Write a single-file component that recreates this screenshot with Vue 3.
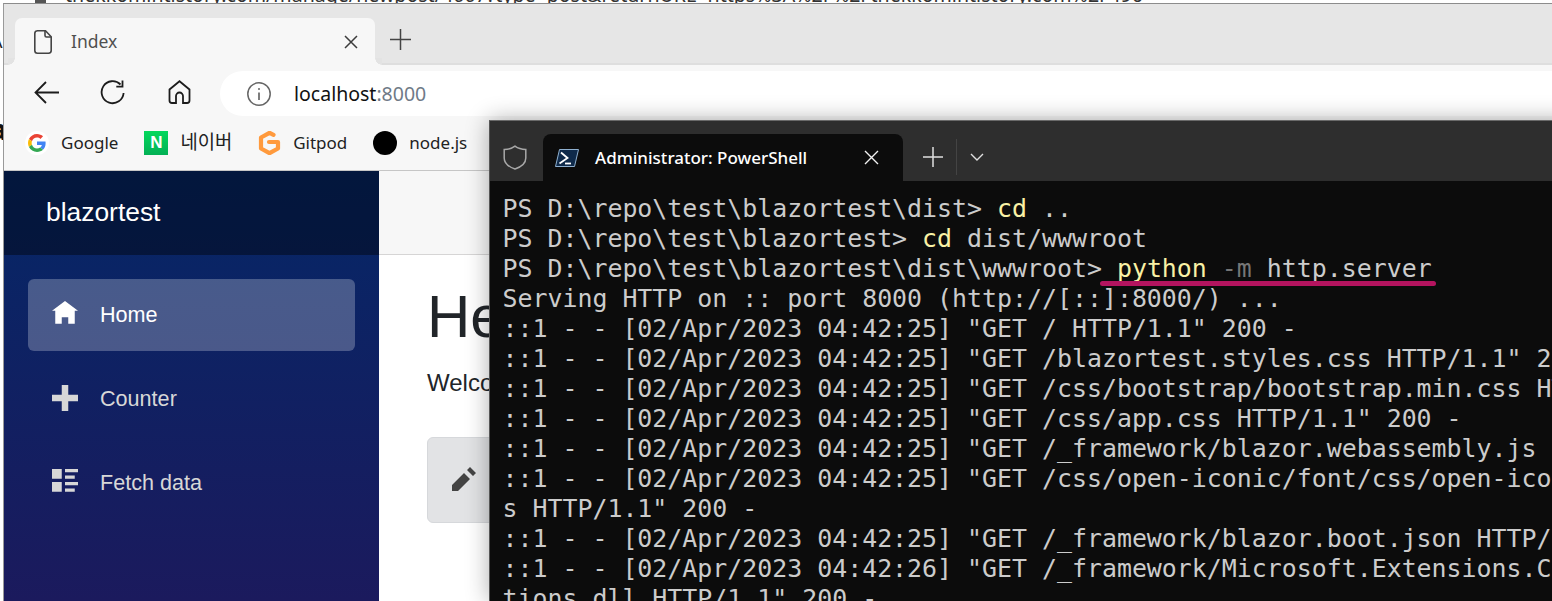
<script setup>
const bookmarks = [
  { label: 'Google', kind: 'google' },
  { label: '네이버', kind: 'naver' },
  { label: 'Gitpod', kind: 'gitpod' },
  { label: 'node.js', kind: 'node' },
]
const nav = [
  { label: 'Home', d: 'M4 0l-4 3h1v4h2v-2h2v2h2v-4.03l1 .03-4-3z', active: true },
  { label: 'Counter', d: 'M3 0v3h-3v2h3v3h2v-3h3v-2h-3v-3h-2z' },
  { label: 'Fetch data', d: 'M0 0v3h3v-3h-3zm4 0v1h4v-1h-4zm0 2v1h3v-1h-3zm-4 2v3h3v-3h-3zm4 0v1h4v-1h-4zm0 2v1h3v-1h-3z' },
]
const log = [
  'Serving HTTP on :: port 8000 (http://[::]:8000/) ...',
  '::1 - - [02/Apr/2023 04:42:25] "GET / HTTP/1.1" 200 -',
  '::1 - - [02/Apr/2023 04:42:25] "GET /blazortest.styles.css HTTP/1.1" 200 -',
  '::1 - - [02/Apr/2023 04:42:25] "GET /css/bootstrap/bootstrap.min.css HTTP/1.1" 200 -',
  '::1 - - [02/Apr/2023 04:42:25] "GET /css/app.css HTTP/1.1" 200 -',
  '::1 - - [02/Apr/2023 04:42:25] "GET /_framework/blazor.webassembly.js HTTP/1.1" 200 -',
  '::1 - - [02/Apr/2023 04:42:25] "GET /css/open-iconic/font/css/open-iconic-bootstrap.min.cs',
  's HTTP/1.1" 200 -',
  '::1 - - [02/Apr/2023 04:42:25] "GET /_framework/blazor.boot.json HTTP/1.1" 200 -',
  '::1 - - [02/Apr/2023 04:42:26] "GET /_framework/Microsoft.Extensions.Configuration.Abstrac',
  'tions.dll HTTP/1.1" 200 -',
]
</script>

<template>
  <div class="desktop">
    <div class="behind-url">
      <span class="behind-icon"></span>
      <span>thekkomintistory.com/manage/newpost/4007?type=post&amp;returnURL=https%3A%2F%2Fthekkomintistory.com%2F496</span>
    </div>
    <span class="behind-a">A</span>
    <span class="behind-b">a</span>

    <section class="browser">
      <div class="tabstrip">
        <div class="tab">
          <svg class="tab-icon" width="18" height="24" viewBox="0 0 18 24" fill="none" stroke="#444" stroke-width="1.6">
            <path d="M3 .8h8.5l5.7 6v13.7a2.7 2.7 0 0 1-2.7 2.7H3.500a2.700 2.700 0 0 1-2.700-2.700V3.500A2.700 2.700 0 0 1 3.500.8z" />
            <path d="M11 1v4.500a1.500 1.500 0 0 0 1.500 1.500H17" />
          </svg>
          <span class="tab-title">Index</span>
          <svg class="tab-close" width="14" height="14" viewBox="0 0 14 14" stroke="#3c3c3c" stroke-width="1.5">
            <path d="M1 1l12 12M13 1L1 13" />
          </svg>
        </div>
        <svg class="tab-new" width="21" height="21" viewBox="0 0 21 21" stroke="#444" stroke-width="1.5">
          <path d="M10.500 0v21M0 10.500h21" />
        </svg>
      </div>

      <div class="toolbar">
        <svg class="tb-back" width="25" height="23" viewBox="0 0 25 23" fill="none" stroke="#1c1c1c" stroke-width="1.800">
          <path d="M25 11.500H1.500M12 1L1.500 11.500 12 22" />
        </svg>
        <svg class="tb-reload" width="25" height="25" viewBox="0 0 25 25" fill="none" stroke="#1c1c1c" stroke-width="1.800">
          <path d="M20.500 4.500A11 11 0 1 0 23.600 13" />
          <path d="M22.500 .5v6.200h-6.200" />
        </svg>
        <svg class="tb-home" width="23" height="24" viewBox="0 0 23 24" fill="none" stroke="#1c1c1c" stroke-width="1.800">
          <path d="M11.500 1.200L1.500 9.500V20.500a2.500 2.500 0 0 0 2.500 2.500H8V16a3.500 3.500 0 0 1 7 0V23h4a2.500 2.500 0 0 0 2.500-2.500V9.500z" />
        </svg>
        <div class="address">
          <svg width="24" height="24" viewBox="0 0 24 24" fill="none" stroke="#666" stroke-width="1.500">
            <circle cx="12" cy="12" r="11.200" />
            <path d="M12 10.500v7.500" stroke-width="1.700" />
            <circle cx="12" cy="7" r="1" fill="#666" stroke="none" />
          </svg>
          <span class="url"><span class="url-host">localhost</span><span class="url-port">:8000</span></span>
        </div>
      </div>

      <div class="bookmarks">
        <div v-for="b in bookmarks" :key="b.kind" class="bookmark" :class="'bm-' + b.kind">
          <span v-if="b.kind === 'google'" class="google-circle">
            <svg width="18" height="18" viewBox="0 0 48 48">
              <path fill="#EA4335" d="M24 9.500c3.540 0 6.710 1.220 9.210 3.600l6.850-6.850C35.900 2.380 30.470 0 24 0 14.620 0 6.510 5.380 2.560 13.220l7.980 6.190C12.430 13.720 17.740 9.500 24 9.500z" />
              <path fill="#4285F4" d="M46.980 24.550c0-1.570-.15-3.090-.38-4.550H24v9.020h12.940c-.58 2.960-2.260 5.480-4.780 7.180l7.730 6c4.510-4.180 7.090-10.360 7.090-17.650z" />
              <path fill="#FBBC05" d="M10.530 28.590c-.48-1.450-.76-2.990-.76-4.590s.27-3.140.76-4.590l-7.980-6.190C.92 16.460 0 20.120 0 24c0 3.880.92 7.540 2.560 10.780l7.970-6.190z" />
              <path fill="#34A853" d="M24 48c6.480 0 11.930-2.130 15.890-5.810l-7.730-6c-2.150 1.450-4.920 2.300-8.160 2.300-6.260 0-11.570-4.220-13.470-9.910l-7.980 6.190C6.510 42.620 14.620 48 24 48z" />
            </svg>
          </span>
          <span v-else-if="b.kind === 'naver'" class="naver-square">N</span>
          <svg v-else-if="b.kind === 'gitpod'" width="23" height="24" viewBox="0 0 23 24" fill="none">
            <path d="M15.500 3.800L11.500 1.800 3 6.500v11l8.500 4.700 8.500-4.700v-6.500L11 11" stroke="#ff9a3d" stroke-width="4.200" stroke-linecap="round" stroke-linejoin="round" />
          </svg>
          <span v-else class="node-dot"></span>
          <span class="bm-label">{{ b.label }}</span>
        </div>
      </div>

      <div class="page">
        <aside class="sidebar">
          <div class="brand">blazortest</div>
          <nav class="nav">
            <div v-for="n in nav" :key="n.label" class="nav-item" :class="{ active: n.active }">
              <svg width="26" height="26" viewBox="0 0 8 8"><path :d="n.d" fill="currentColor" /></svg>
              <span>{{ n.label }}</span>
            </div>
          </nav>
        </aside>
        <main class="main">
          <div class="top-row"></div>
          <article class="article">
            <h1>Hello, world!</h1>
            <p>Welcome to your new app.</p>
            <div class="survey">
              <svg width="24" height="24" viewBox="0 0 8 8"><path fill="#444" d="M6 0l-1 1 2 2 1-1-2-2zm-2 2l-4 4v2h2l4-4-2-2z" /></svg>
            </div>
          </article>
        </main>
      </div>
    </section>

    <section class="terminal">
      <div class="term-bar">
        <svg class="shield" width="24" height="25" viewBox="0 0 24 25" fill="none" stroke="#a8a8a8" stroke-width="1.500">
          <path d="M12 1.200c3 2.300 6.500 3.300 10.800 3.300v8.500c0 5-4.300 8.800-10.800 11-6.500-2.200-10.800-6-10.800-11V4.500C5.500 4.500 9 3.500 12 1.200z" />
        </svg>
        <div class="term-tab">
          <svg class="ps-icon" width="24" height="18" viewBox="0 0 24 18">
            <path d="M4.500.5H23.500L19.500 17.500H.5z" fill="#0f2a4a" stroke="#8fb0d0" stroke-width="1" />
            <path d="M6 3.500l6.500 5.500-8 5.500" fill="none" stroke="#fff" stroke-width="1.800" />
            <path d="M10 14.500h6" stroke="#fff" stroke-width="1.800" />
          </svg>
          <span class="term-title">Administrator: PowerShell</span>
          <svg class="term-close" width="15" height="15" viewBox="0 0 15 15" stroke="#f2f2f2" stroke-width="1.400">
            <path d="M1 1l13 13M14 1L1 14" />
          </svg>
        </div>
        <svg class="term-new" width="20" height="20" viewBox="0 0 20 20" stroke="#e0e0e0" stroke-width="1.500">
          <path d="M10 0v20M0 10h20" />
        </svg>
        <span class="term-sep"></span>
        <svg width="14" height="8" viewBox="0 0 14 8" fill="none" stroke="#e0e0e0" stroke-width="1.400">
          <path d="M1 1l6 6 6-6" />
        </svg>
      </div>
      <div class="term-body">
        <div class="line">PS D:\repo\test\blazortest\dist&gt; <span class="cmd">cd</span> ..</div>
        <div class="line">PS D:\repo\test\blazortest&gt; <span class="cmd">cd</span> dist/wwwroot</div>
        <div class="line">PS D:\repo\test\blazortest\dist\wwwroot&gt; <span class="cmd">python</span> <span class="flag">-m</span> http.server<span class="underline"></span></div>
        <div v-for="(l, i) in log" :key="i" class="line">{{ l }}</div>
      </div>
    </section>
  </div>
</template>

<style>
html, body { margin: 0; padding: 0; background: #fff; overflow: hidden; }
</style>

<style scoped>
.desktop {
  position: relative;
  width: 1552px;
  height: 601px;
  overflow: hidden;
  background: #fff;
}
.behind-url {
  position: absolute;
  left: 35px;
  top: -19px;
  display: flex;
  align-items: center;
  gap: 19px;
  font: 400 19.600px/28px "Noto Sans", sans-serif;
  color: #333;
  white-space: nowrap;
}
.behind-icon { width: 11px; height: 20px; background: #555; }
.behind-a {
  position: absolute;
  left: -9px;
  top: 29px;
  font: 18px/24px "Noto Sans", sans-serif;
  color: #222;
}
.behind-b {
  position: absolute;
  left: -10px;
  top: 112px;
  font: 700 28px/34px "Noto Sans", sans-serif;
  color: #111;
}
.browser {
  position: absolute;
  left: 3px;
  top: 3px;
  width: 1549px;
  height: 598px;
  box-sizing: border-box;
  border-left: 1px solid #9a9a9a;
  border-top: 1px solid #8c8c8c;
  display: flex;
  flex-direction: column;
  background: #f7f7f7;
  font-family: "Noto Sans", "Noto Sans CJK KR", sans-serif;
}
.tabstrip {
  height: 61px;
  flex: none;
  background: #e6e6e6;
  box-shadow: inset 0 -2px 0 #dedede;
  display: flex;
  align-items: flex-end;
  padding-left: 11px;
}
.tab {
  position: relative;
  width: 360px;
  height: 47px;
  box-sizing: border-box;
  background: #f7f7f7;
  border-radius: 7px 7px 0 0;
  display: flex;
  align-items: center;
  padding: 0 17px 0 19px;
}
.tab::before,
.tab::after {
  content: "";
  position: absolute;
  bottom: 0;
  width: 7px;
  height: 7px;
}
.tab::before {
  left: -7px;
  background: radial-gradient(circle at 0 0, #e3e3e3 6.500px, #f7f7f7 7px);
}
.tab::after {
  right: -7px;
  background: radial-gradient(circle at 100% 0, #e3e3e3 6.500px, #f7f7f7 7px);
}
.tab-icon { flex: none; }
.tab-title {
  margin-left: 19px;
  margin-bottom: 2px;
  font-size: 17.500px;
  color: #505050;
  flex: 1;
}
.tab-close { flex: none; }
.tab-new { margin: 0 0 15px 15px; }
.toolbar {
  height: 53px;
  flex: none;
  box-sizing: border-box;
  display: flex;
  align-items: center;
  padding: 1px 0 0 30px;
  background: #f7f7f7;
}
.tb-back { margin-right: 41px; }
.tb-reload { margin-right: 43px; }
.tb-home { margin-right: 30px; }
.address {
  flex: 1;
  height: 45px;
  margin-top: 3px;
  margin-left: -1px;
  background: #fff;
  border-radius: 23px 0 0 23px;
  display: flex;
  align-items: center;
  padding-left: 27px;
  gap: 23px;
}
.url { font-size: 19.500px; }
.url-host { color: #111; }
.url-port { color: #6f7a87; }
.bookmarks {
  height: 53px;
  flex: none;
  box-sizing: border-box;
  border-bottom: 1px solid #c6c6c6;
  display: flex;
  align-items: center;
  padding: 0 0 2px 21px;
  gap: 26px;
}
.bookmark {
  display: flex;
  align-items: center;
  gap: 12px;
  font-size: 17px;
  color: #222;
}
.bm-label { margin-bottom: 2px; }
.bm-naver .bm-label { margin-bottom: 5px; font-size: 18.800px; }
.google-circle {
  width: 24px;
  height: 24px;
  border-radius: 50%;
  background: #fff;
  display: flex;
  align-items: center;
  justify-content: center;
}
.naver-square {
  width: 24px;
  height: 24px;
  background: linear-gradient(180deg, #03d85c, #03b055);
  color: #fff;
  font: 700 17px/24px "Liberation Sans", sans-serif;
  text-align: center;
}
.node-dot {
  width: 24px;
  height: 24px;
  border-radius: 50%;
  background: #000;
}
.page {
  flex: 1;
  min-height: 0;
  display: flex;
  background: #fff;
  font-family: "Liberation Sans", sans-serif;
}
.sidebar {
  width: 375px;
  flex: none;
  background: linear-gradient(180deg, #052767 0%, #1b1a5d 100%);
  display: flex;
  flex-direction: column;
}
.brand {
  height: 84px;
  flex: none;
  box-sizing: border-box;
  padding-left: 42px;
  display: flex;
  align-items: center;
  background: rgba(0, 0, 0, 0.4);
  color: #fff;
  font-size: 26.400px;
  padding-bottom: 2px;
}
.nav {
  display: flex;
  flex-direction: column;
  gap: 12px;
  padding: 24px;
}
.nav-item {
  height: 72px;
  box-sizing: border-box;
  border-radius: 6px;
  display: flex;
  align-items: center;
  gap: 22px;
  padding: 0 24px;
  color: #d7d7d7;
  font-size: 21.600px;
}
.nav-item svg { margin-top: -2px; }
.nav-item.active {
  background: rgba(255, 255, 255, 0.25);
  color: #fff;
}
.main { flex: 1; min-width: 0; display: flex; flex-direction: column; }
.top-row {
  height: 84px;
  flex: none;
  box-sizing: border-box;
  background: #f7f7f7;
  border-bottom: 1px solid #d6d5d5;
}
.article { padding: 26px 0 0 48px; color: #212529; }
.article h1 {
  margin: 0 0 12px;
  font-size: 60px;
  line-height: 72px;
  font-weight: 400;
  white-space: nowrap;
}
.article p {
  margin: 0 0 36px;
  font-size: 24px;
  line-height: 36px;
  white-space: nowrap;
}
.survey {
  height: 86px;
  box-sizing: border-box;
  background: #e2e3e5;
  border: 1px solid #d6d8db;
  border-radius: 6px;
  display: flex;
  align-items: center;
  padding-left: 24px;
  padding-bottom: 3px;
}
.terminal {
  position: absolute;
  left: 489px;
  top: 120px;
  width: 1100px;
  height: 481px;
  box-sizing: border-box;
  border-top: 1px solid #6a6a6a;
  border-left: 1px solid #555;
  background: #0c0c0c;
  box-shadow: 0 0 22px rgba(0, 0, 0, 0.32);
  display: flex;
  flex-direction: column;
}
.term-bar {
  height: 60px;
  flex: none;
  background: #2e2e2e;
  display: flex;
  align-items: center;
  padding-left: 13px;
}
.shield { flex: none; margin-top: 12px; }
.term-tab {
  align-self: flex-end;
  width: 360px;
  height: 47px;
  box-sizing: border-box;
  margin-left: 16px;
  background: #0c0c0c;
  border-radius: 8px 8px 0 0;
  display: flex;
  align-items: center;
  padding: 0 24px 0 12px;
  color: #fff;
}
.ps-icon { flex: none; }
.term-title {
  flex: 1;
  margin-left: 16px;
  font: 500 17px "Noto Sans", sans-serif;
  white-space: nowrap;
}
.term-new { margin: 12px 0 0 20px; }
.term-sep { width: 1px; height: 36px; background: #444; margin: 12px 13px 0 13px; }
.term-bar > svg:last-child { margin-top: 12px; }
.term-body {
  padding: 13px 0 0 12.500px;
  color: #cccccc;
  font: 24.900px/30px "DejaVu Sans Mono", monospace;
  white-space: pre;
  overflow: hidden;
  flex: 1;
}
.line { position: relative; height: 30px; }
.cmd { color: #f9f1a5; }
.flag { color: #767676; }
.underline {
  position: absolute;
  left: 597.500px;
  top: 27px;
  width: 336px;
  height: 5px;
  border-radius: 3px;
  background: #b4145f;
}
</style>
